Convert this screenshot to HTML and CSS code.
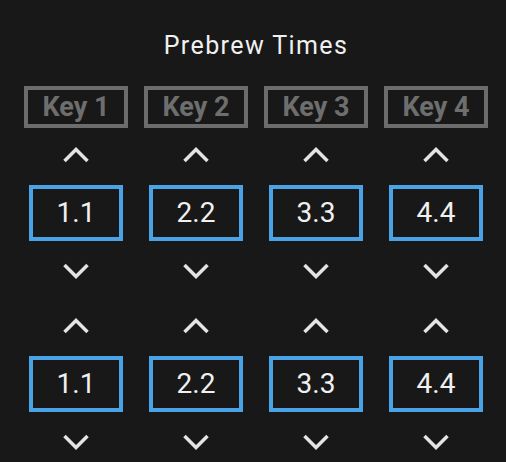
FILE: index.html
```html
<!DOCTYPE html>
<html lang="en">
<head>
    <meta charset="UTF-8">
    <meta name="viewport" content="width=device-width, initial-scale=1.0">
    <title>Prebrew Times</title>
    <link rel="stylesheet" href="styles.css">
</head>
<body>

    <div class="container">
        <h1>Prebrew Times</h1>
        <div class="columns">
            <div class="column">
                <div class="key">Key 1</div>
                <div class="stepper">
                    <svg class="chevron" viewBox="0 0 26 16"><polyline points="1.5,14 13,2.5 24.5,14"/></svg>
                    <div class="value">1.1</div>
                    <svg class="chevron" viewBox="0 0 26 16"><polyline points="1.5,2 13,13.5 24.5,2"/></svg>
                </div>
                <div class="stepper">
                    <svg class="chevron" viewBox="0 0 26 16"><polyline points="1.5,14 13,2.5 24.5,14"/></svg>
                    <div class="value">1.1</div>
                    <svg class="chevron" viewBox="0 0 26 16"><polyline points="1.5,2 13,13.5 24.5,2"/></svg>
                </div>
            </div>
            <div class="column">
                <div class="key">Key 2</div>
                <div class="stepper">
                    <svg class="chevron" viewBox="0 0 26 16"><polyline points="1.5,14 13,2.5 24.5,14"/></svg>
                    <div class="value">2.2</div>
                    <svg class="chevron" viewBox="0 0 26 16"><polyline points="1.5,2 13,13.5 24.5,2"/></svg>
                </div>
                <div class="stepper">
                    <svg class="chevron" viewBox="0 0 26 16"><polyline points="1.5,14 13,2.5 24.5,14"/></svg>
                    <div class="value">2.2</div>
                    <svg class="chevron" viewBox="0 0 26 16"><polyline points="1.5,2 13,13.5 24.5,2"/></svg>
                </div>
            </div>
            <div class="column">
                <div class="key">Key 3</div>
                <div class="stepper">
                    <svg class="chevron" viewBox="0 0 26 16"><polyline points="1.5,14 13,2.5 24.5,14"/></svg>
                    <div class="value">3.3</div>
                    <svg class="chevron" viewBox="0 0 26 16"><polyline points="1.5,2 13,13.5 24.5,2"/></svg>
                </div>
                <div class="stepper">
                    <svg class="chevron" viewBox="0 0 26 16"><polyline points="1.5,14 13,2.5 24.5,14"/></svg>
                    <div class="value">3.3</div>
                    <svg class="chevron" viewBox="0 0 26 16"><polyline points="1.5,2 13,13.5 24.5,2"/></svg>
                </div>
            </div>
            <div class="column">
                <div class="key">Key 4</div>
                <div class="stepper">
                    <svg class="chevron" viewBox="0 0 26 16"><polyline points="1.5,14 13,2.5 24.5,14"/></svg>
                    <div class="value">4.4</div>
                    <svg class="chevron" viewBox="0 0 26 16"><polyline points="1.5,2 13,13.5 24.5,2"/></svg>
                </div>
                <div class="stepper">
                    <svg class="chevron" viewBox="0 0 26 16"><polyline points="1.5,14 13,2.5 24.5,14"/></svg>
                    <div class="value">4.4</div>
                    <svg class="chevron" viewBox="0 0 26 16"><polyline points="1.5,2 13,13.5 24.5,2"/></svg>
                </div>
            </div>
        </div>
    </div>

</body>
</html>
```

FILE: styles.css
```css
body {
    font-family: 'Roboto', 'Liberation Sans', sans-serif;
    background-color: #181818; /* Dark panel */
    color: #f0f0f0;
    margin: 0;
    height: 100vh;
}
.container {
    padding-left: 6px;
    padding-top: 31px;
}
h1 {
    margin: 0;
    font-size: 25px;
    font-weight: 400;
    letter-spacing: 1.4px;
    line-height: 29px;
    text-align: center;
}
.columns {
    display: grid;
    grid-template-columns: repeat(4, 120px);
    justify-content: center;
    margin-top: 26px;
}
.column {
    display: flex;
    flex-direction: column;
    align-items: center;
}
.key {
    box-sizing: border-box;
    width: 104px;
    height: 42px;
    border: 4px solid #6c6c6c;
    color: #6e6e6e;
    font-size: 27px;
    font-weight: 700;
    line-height: 34px;
    text-align: center;
}
.stepper {
    display: flex;
    flex-direction: column;
    align-items: center;
    gap: 22px;
    margin-top: 19px;
}
.stepper + .stepper {
    margin-top: 39px;
}
.chevron {
    display: block;
    width: 26px;
    height: 16px;
}
.chevron polyline {
    fill: none;
    stroke: #e4e4e4;
    stroke-width: 3.5;
}
.value {
    box-sizing: border-box;
    width: 94px;
    height: 56px;
    border: 4px solid #4aa3e6; /* Blue outline */
    font-size: 28px;
    line-height: 48px;
    text-align: center;
}
```
